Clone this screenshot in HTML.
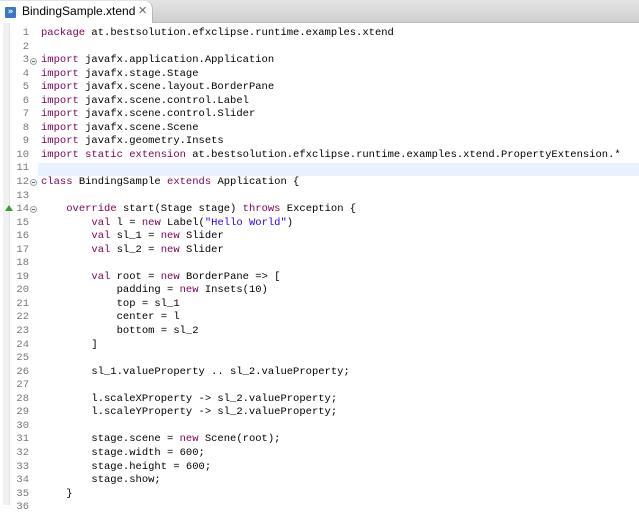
<!DOCTYPE html>
<html><head><style>
body{margin:0;width:639px;height:505px;overflow:hidden;background:#fff;font-family:"Liberation Mono",monospace;}
#bar{position:absolute;left:0;top:0;width:639px;height:22px;background:linear-gradient(#e4e4e4,#cfcfcf);border-bottom:1px solid #bdbdbd;}
#tab{position:absolute;left:0;top:1px;width:152px;height:22px;background:#fff;border-radius:0 8px 0 0;border-right:1px solid #b8b8b8;}
#tab .t{position:absolute;left:22px;top:3px;font:12px "Liberation Sans",sans-serif;color:#000;}
#tab .x{position:absolute;left:138px;top:3px;font:11px "DejaVu Sans",sans-serif;color:#666;}
#icon{position:absolute;left:5px;top:6px;width:11px;height:11px;background:#3a78c6;border-radius:1px;color:#fff;font:bold 9px/11px "DejaVu Sans";text-align:center;}
#strip{position:absolute;left:3px;top:23px;width:6px;height:482px;background:#f1f1f1;border-right:1px solid #e2e2e2;}
#hl{position:absolute;left:38px;top:163px;width:601px;height:13px;background:#e8f2fe;}
#code{position:absolute;left:0;top:27px;font-size:10.5px;line-height:13.55px;white-space:pre;}
.n{display:inline-block;width:29px;text-align:right;color:#787878;margin-right:12px;}
.k{color:#7f0055;}.s{color:#2a00ff;}
.f{position:absolute;left:30px;width:7px;height:7px;border:1px solid #9aa;border-radius:50%;box-sizing:border-box;background:#f4f6f8;}
.f:after{content:"";position:absolute;left:1px;top:2px;width:3px;height:1px;background:#667;}
#tri{position:absolute;left:5px;top:205px;width:0;height:0;border-left:4px solid transparent;border-right:4px solid transparent;border-bottom:6px solid #3a9a3a;}
</style></head><body>
<div id="bar"></div>
<div id="tab"><div id="icon">»</div><span class="t">BindingSample.xtend</span><span class="x">✕</span></div>
<div id="strip"></div>
<div id="hl"></div>
<div class="f" style="top:58px"></div>
<div class="f" style="top:179px"></div>
<div class="f" style="top:206px"></div>
<div id="tri"></div>
<div id="code"><span class="n">1</span><span class="k">package</span> at.bestsolution.efxclipse.runtime.examples.xtend
<span class="n">2</span>
<span class="n">3</span><span class="k">import</span> javafx.application.Application
<span class="n">4</span><span class="k">import</span> javafx.stage.Stage
<span class="n">5</span><span class="k">import</span> javafx.scene.layout.BorderPane
<span class="n">6</span><span class="k">import</span> javafx.scene.control.Label
<span class="n">7</span><span class="k">import</span> javafx.scene.control.Slider
<span class="n">8</span><span class="k">import</span> javafx.scene.Scene
<span class="n">9</span><span class="k">import</span> javafx.geometry.Insets
<span class="n">10</span><span class="k">import static extension</span> at.bestsolution.efxclipse.runtime.examples.xtend.PropertyExtension.*
<span class="n">11</span>
<span class="n">12</span><span class="k">class</span> BindingSample <span class="k">extends</span> Application {
<span class="n">13</span>
<span class="n">14</span>    <span class="k">override</span> start(Stage stage) <span class="k">throws</span> Exception {
<span class="n">15</span>        <span class="k">val</span> l = <span class="k">new</span> Label(<span class="s">"Hello World"</span>)
<span class="n">16</span>        <span class="k">val</span> sl_1 = <span class="k">new</span> Slider
<span class="n">17</span>        <span class="k">val</span> sl_2 = <span class="k">new</span> Slider
<span class="n">18</span>
<span class="n">19</span>        <span class="k">val</span> root = <span class="k">new</span> BorderPane => [
<span class="n">20</span>            padding = <span class="k">new</span> Insets(10)
<span class="n">21</span>            top = sl_1
<span class="n">22</span>            center = l
<span class="n">23</span>            bottom = sl_2
<span class="n">24</span>        ]
<span class="n">25</span>
<span class="n">26</span>        sl_1.valueProperty .. sl_2.valueProperty;
<span class="n">27</span>
<span class="n">28</span>        l.scaleXProperty -> sl_2.valueProperty;
<span class="n">29</span>        l.scaleYProperty -> sl_2.valueProperty;
<span class="n">30</span>
<span class="n">31</span>        stage.scene = <span class="k">new</span> Scene(root);
<span class="n">32</span>        stage.width = 600;
<span class="n">33</span>        stage.height = 600;
<span class="n">34</span>        stage.show;
<span class="n">35</span>    }
<span class="n">36</span></div>
</body></html>
